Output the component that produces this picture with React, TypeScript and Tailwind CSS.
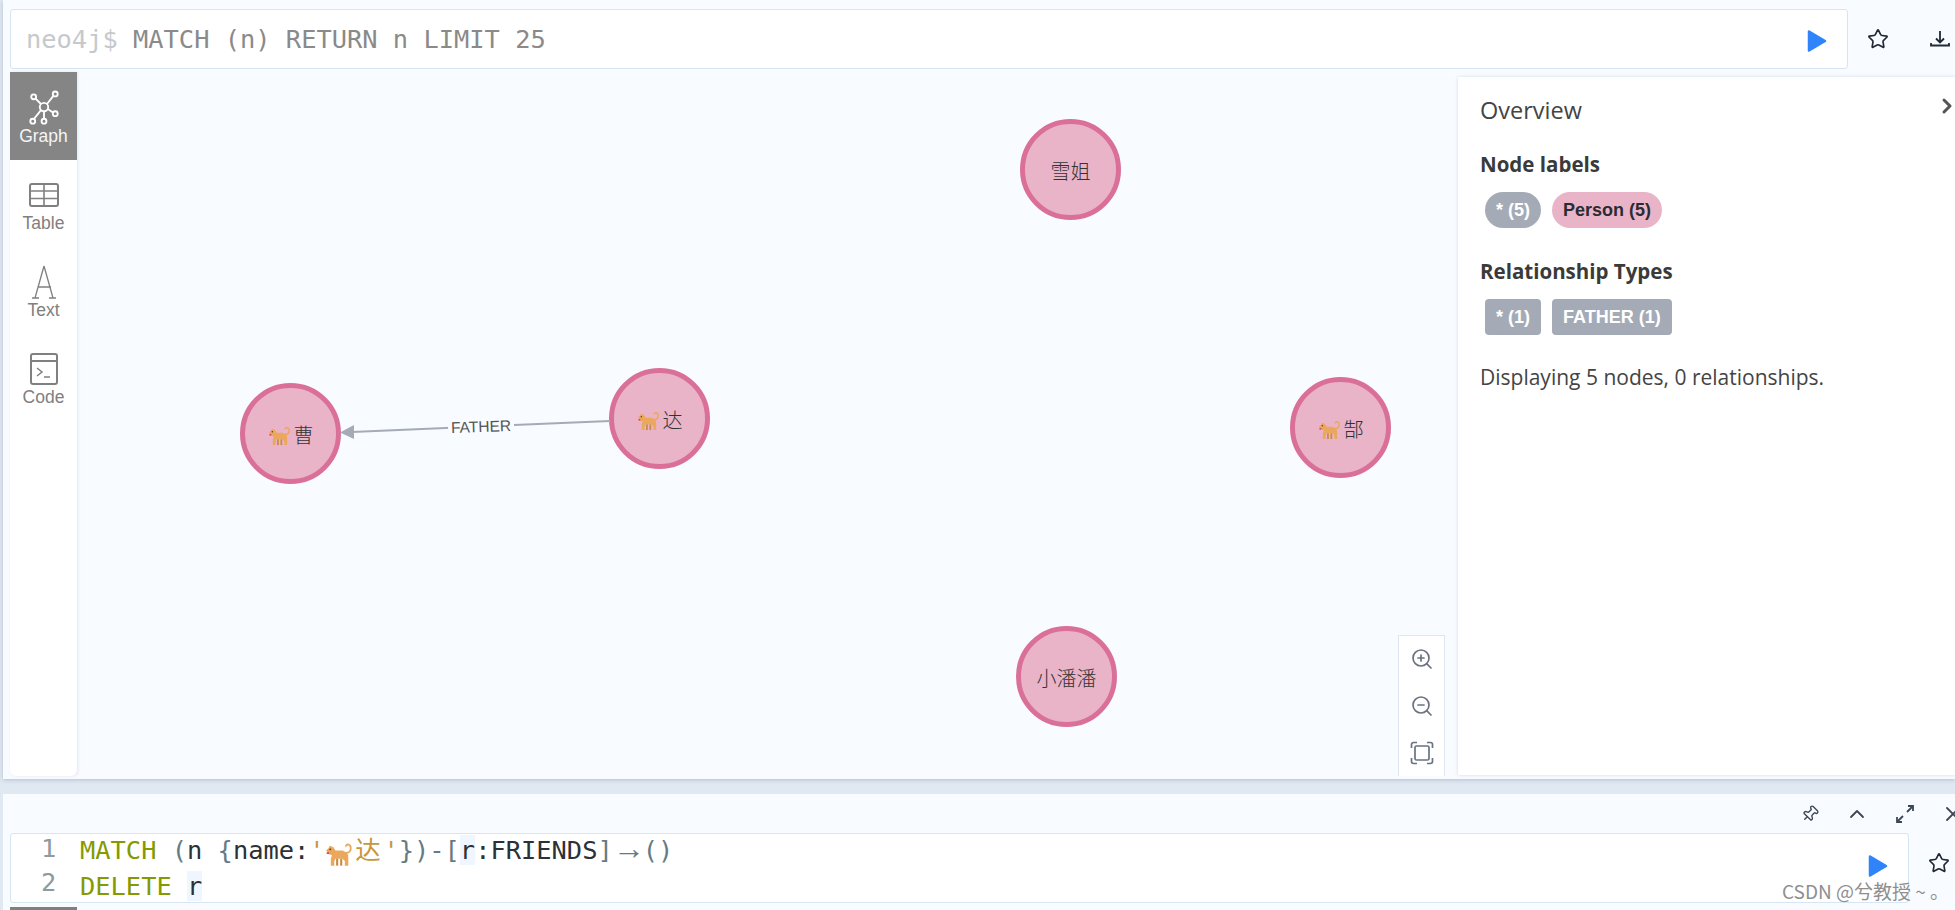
import { ChevronRight, ChevronUp, Pin, Star, X, ZoomIn, ZoomOut } from "lucide-react";

const MONO = "font-['DejaVu_Sans_Mono',monospace]";
const ARIAL = "font-['Liberation_Sans','Noto_Sans_CJK_SC',sans-serif]";
const OPEN = "font-['Open_Sans',sans-serif]";

const nodes = [
  { name: "雪姐", x: 1070, y: 170, dog: false },
  { name: "曹", x: 290, y: 434, dog: true },
  { name: "达", x: 659, y: 419, dog: true },
  { name: "郜", x: 1340, y: 428, dog: true },
  { name: "小潘潘", x: 1066, y: 677, dog: false },
];

function Dog({ size = 22 }: { size?: number }) {
  return (
    <svg width={size} height={size} viewBox="0 0 24 24" className="inline-block shrink-0">
      <path d="M18 11c3 0 4.500-2 4-5-.4-2-3-3-4-1" fill="none" stroke="#eba85c" strokeWidth="1.600" strokeLinecap="round" />
      <path d="M19 11c1 2 1 4 1 6v5h-3v-4l-2-2H9l-1 2v4H5v-6L6 13 3 12 1 9l2-2 1-2 3 1 2 3h6z" fill="#eba85c" />
      <rect x="9.500" y="16" width="1.800" height="6" fill="#c98a45" />
      <rect x="13" y="16" width="1.800" height="6" fill="#c98a45" />
      <circle cx="4.500" cy="8" r="0.800" fill="#5c3a1a" />
      <rect x="1.500" y="10.500" width="2" height="1.500" fill="#d8434f" />
    </svg>
  );
}

function Play() {
  return (
    <svg width="20" height="24" viewBox="0 0 20 24">
      <path d="M2 2.500 18 12 2 21.500z" fill="#2f84fb" stroke="#2f84fb" strokeWidth="2.500" strokeLinejoin="round" />
    </svg>
  );
}

function GraphIcon({ stroke }: { stroke: string }) {
  return (
    <svg width="30" height="36" viewBox="0 0 32 38" fill="none" stroke={stroke} strokeWidth="2">
      <circle cx="16" cy="18" r="4.500" />
      <circle cx="5" cy="7" r="2.600" />
      <circle cx="28" cy="4" r="2.600" />
      <circle cx="28" cy="25" r="2.600" />
      <circle cx="16" cy="33" r="2.600" />
      <circle cx="4" cy="33" r="2.600" />
      <path d="M7 9l6 6M26 6l-7 9M20 20l6 4M16 23v8M13 21l-8 10" />
    </svg>
  );
}

function TableIcon() {
  return (
    <svg width="30" height="24" viewBox="0 0 30 24" fill="none" stroke="#808080" strokeWidth="2">
      <rect x="1" y="1" width="28" height="22" rx="2" />
      <path d="M1 8h28M1 15.500h28M15 1v22" strokeWidth="1.600" />
    </svg>
  );
}

function TextIcon() {
  return (
    <svg width="26" height="34" viewBox="0 0 26 34" fill="none" stroke="#808080" strokeWidth="1.300">
      <path d="M13 1 4 33M13 1l9 32M7 22h13M1 33h7M18 33h7" />
    </svg>
  );
}

function CodeIcon() {
  return (
    <svg width="30" height="32" viewBox="0 0 30 32" fill="none" stroke="#808080" strokeWidth="2">
      <rect x="2" y="1" width="26" height="30" rx="2" />
      <path d="M2 8h26" />
      <path d="M8 15l5 4-5 4M15 24h6" strokeWidth="1.500" />
    </svg>
  );
}

function SideTab({ label, icon, active }: { label: string; icon: React.ReactNode; active?: boolean }) {
  return (
    <div
      className={`flex h-[87px] flex-col items-center justify-end pb-[13px] text-[17.5px] leading-[22px] ${ARIAL} ${
        active ? "h-[88px] bg-[#858585] text-[#f5f5f5]" : "text-[#808080]"
      }`}
    >
      <div className="flex h-[40px] items-center justify-center pt-[5px]">{icon}</div>
      <span>{label}</span>
    </div>
  );
}

function Pill({ label, bg, text, round }: { label: string; bg: string; text: string; round: boolean }) {
  return (
    <span
      className={`flex h-[36px] items-center px-[11px] text-[18px] font-bold ${ARIAL} ${bg} ${text} ${
        round ? "rounded-full" : "rounded-[4px]"
      }`}
    >
      {label}
    </span>
  );
}

function GraphNode({ name, x, y, dog }: { name: string; x: number; y: number; dog: boolean }) {
  return (
    <div
      className="absolute flex h-[101px] w-[101px] items-center justify-center gap-[3px] rounded-full border-[5px] border-[#da7098] bg-[#e9b4c8] pt-[3px] text-[20px] text-[#333333] font-['Noto_Sans_CJK_SC',sans-serif] font-light"
      style={{ left: x - 50 - 77, top: y - 51 - 72 }}
    >
      {dog && <Dog size={23} />}
      {name}
    </div>
  );
}

export default function App() {
  return (
    <div className="flex h-[910px] w-[1955px] flex-col overflow-hidden bg-[#e0e8f1] pl-[3px]">
      {/* Main frame */}
      <div className="relative h-[779px] shrink-0 bg-[#f8fbff] shadow-[0_1px_4px_rgba(100,120,150,0.35)]">
        {/* Query bar */}
        <div className="flex h-[72px] items-start pt-[9px]">
          <div className="ml-[7px] flex h-[60px] w-[1838px] items-center justify-between rounded-[3px] border border-[#d7e4f2] bg-white pl-[15px] pr-[20px]">
            <span className={`text-[25.4px] text-[#8a8a8a] ${MONO}`}>
              <span className="text-[#c5c9cd]">neo4j$</span> MATCH (n) RETURN n LIMIT 25
            </span>
            <span className="mt-[4px]"><Play /></span>
          </div>
          <div className="ml-[19px] mt-[19px] flex items-center gap-[40px]">
            <Star size={22} strokeWidth={1.8} className="text-[#1f2a36]" />
            <svg width="22" height="22" viewBox="0 0 22 22" fill="none" stroke="#1f2a36" strokeWidth="1.800">
              <path d="M11 3v11M7 10.500l4 4 4-4M2 15v2.500h18V15" />
            </svg>
          </div>
        </div>

        <div className="flex h-[704px]">
          {/* Sidebar */}
          <div className="ml-[7px] flex w-[67px] shrink-0 flex-col rounded-b-[6px] bg-white shadow-[1px_0_3px_rgba(150,170,200,0.25)]">
            <SideTab label="Graph" active icon={<GraphIcon stroke="#ffffff" />} />
            <SideTab label="Table" icon={<TableIcon />} />
            <SideTab label="Text" icon={<TextIcon />} />
            <SideTab label="Code" icon={<CodeIcon />} />
          </div>

          {/* Canvas */}
          <div className="relative flex-1 overflow-hidden">
            {nodes.map((n) => (
              <GraphNode key={n.name} {...n} />
            ))}
            <svg className="absolute left-0 top-0" width="700" height="500">
              <line x1="533" y1="349" x2="275" y2="360" stroke="#a5abb6" strokeWidth="2" />
              <path d="M263 360.500 277 353 277 367z" fill="#a5abb6" />
              <g transform="rotate(-2 404 354)">
                <rect x="371" y="342" width="66" height="22" fill="#f8fbff" />
                <text x="404" y="360" textAnchor="middle" fontFamily="Liberation Sans" fontSize="15.500" fill="#555555">
                  FATHER
                </text>
              </g>
            </svg>

            {/* Zoom controls */}
            <div className="absolute left-[1321px] top-[563px] flex h-[141px] w-[47px] flex-col items-center gap-[23px] border border-b-0 border-[#dfe6f1] bg-white pt-[11px] text-[#6b7280]">
              <ZoomIn size={24} strokeWidth={1.7} />
              <ZoomOut size={24} strokeWidth={1.7} />
              <svg width="24" height="24" viewBox="0 0 24 24" fill="none" stroke="currentColor" strokeWidth="1.700">
                <rect x="5" y="5" width="14" height="14" rx="1.500" />
                <path d="M1.500 7V3.500a2 2 0 0 1 2-2H7M17 1.500h3.500a2 2 0 0 1 2 2V7M22.500 17v3.500a2 2 0 0 1-2 2H17M7 22.500H3.500a2 2 0 0 1-2-2V17" />
              </svg>
            </div>
          </div>

          {/* Overview */}
          <div className={`relative mt-[5px] h-[698px] w-[497px] shrink-0 bg-white pl-[22px] pt-[17px] text-[#444444] shadow-[0_0_3px_rgba(150,170,200,0.4)] ${OPEN}`}>
            <ChevronRight size={24} strokeWidth={3} className="absolute right-[-4px] top-[17px] text-[#555555]" />
            <h3 className="text-[23.5px] leading-[32px]">Overview</h3>
            <h4 className="mt-[24px] text-[20.5px] font-bold leading-[28px] text-[#3a3a3a]">Node labels</h4>
            <div className="ml-[5px] mt-[14px] flex gap-[11px]">
              <Pill label="* (5)" bg="bg-[#a5abb6]" text="text-white" round />
              <Pill label="Person (5)" bg="bg-[#e9b4c8]" text="text-[#2a2c34]" round />
            </div>
            <h4 className="mt-[29px] text-[20.5px] font-bold leading-[28px] text-[#3a3a3a]">Relationship Types</h4>
            <div className="ml-[5px] mt-[14px] flex gap-[11px]">
              <Pill label="* (1)" bg="bg-[#a5abb6]" text="text-white" round={false} />
              <Pill label="FATHER (1)" bg="bg-[#a5abb6]" text="text-white" round={false} />
            </div>
            <p className="mt-[28px] text-[21px] leading-[28px]">Displaying 5 nodes, 0 relationships.</p>
          </div>
        </div>
      </div>

      {/* Editor frame */}
      <div className="relative mt-[15px] flex-1 bg-[#f8fbff]">
        <div className="flex h-[39px] items-center justify-end gap-[26px] text-[#3c4654]">
          <Pin size={18} strokeWidth={1.8} className="rotate-45" />
          <ChevronUp size={24} strokeWidth={1.8} />
          <svg width="20" height="20" viewBox="0 0 20 20" fill="none" stroke="currentColor" strokeWidth="1.800">
            <path d="M12 8l6-6M13 2h5v5M8 12l-6 6M2 13v5h5" />
          </svg>
          <X size={24} strokeWidth={1.8} className="mr-[-10px]" />
        </div>
        <div className="flex items-start">
          <div className={`relative ml-[7px] flex h-[70px] w-[1899px] rounded-[3px] border border-[#d7e4f2] bg-white text-[25.4px] leading-[34px] ${MONO}`}>
            <div className="-mt-[3px] w-[69px] pl-[30px] text-[#8d9a9f]">
              <div>1</div>
              <div>2</div>
            </div>
            <div className="-mt-[3px] text-[#2b3137]">
              <div>
                <span className="text-[#859900]">MATCH</span> <span className="text-[#657b83]">(</span>n <span className="text-[#657b83]">{"{"}</span>name:
                <span className="text-[#c8963e]">'</span>
                <span className="inline-block w-[2ch] align-middle"><Dog size={28} /></span>
                <span className="inline-block w-[2ch] font-['Noto_Sans_CJK_SC',sans-serif] text-[#c8963e]">达</span>
                <span className="text-[#c8963e]">'</span>
                <span className="text-[#657b83]">{"})"}-[</span>
                <span className="bg-[#f0f6ff]">r</span>:FRIENDS
                <span className="text-[#657b83]">]</span>
                <span className="inline-block w-[30px] text-center text-[32px] leading-[30px] font-['Liberation_Sans',sans-serif] text-[#657b83]">→</span>
                <span className="text-[#657b83]">()</span>
              </div>
              <div>
                <span className="text-[#859900]">DELETE</span> <span className="bg-[#f0f6ff]">r</span>
              </div>
            </div>
            <div className="absolute left-[1857px] top-[20px]"><Play /></div>
          </div>
          <Star size={22} strokeWidth={1.8} className="ml-[19px] mt-[19px] text-[#1f2a36]" />
        </div>
        <div className="absolute bottom-0 left-[7px] h-[3px] w-[67px] bg-[#808080]" />
      </div>

      {/* Watermark */}
      <span className="absolute left-[1782px] top-[878px] text-[19px] leading-[26px] text-[#8f8f8f] font-['Noto_Sans_CJK_SC',sans-serif] [text-shadow:0_0_2px_white]">
        CSDN @兮教授 ~ 。
      </span>
    </div>
  );
}
